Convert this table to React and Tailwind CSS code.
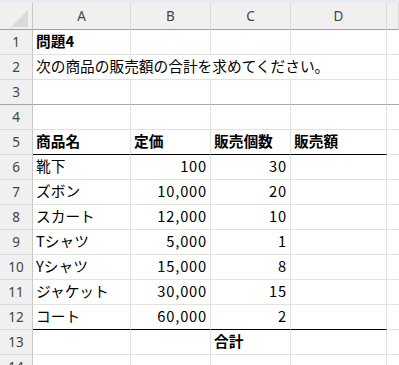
const COLS = ['A', 'B', 'C', 'D', ''];

// each row: [label, cells...]; cell = { v, bold, right, span }
const ROWS = [
  { n: 1, cells: [{ v: '問題4', bold: true }, {}, {}, {}] },
  { n: 2, cells: [{ v: '次の商品の販売額の合計を求めてください。', span: true }] },
  { n: 3, cells: [{}, {}, {}, {}], freeze: true },
  { n: 4, cells: [{}, {}, {}, {}] },
  {
    n: 5,
    cells: [
      { v: '商品名', bold: true },
      { v: '定価', bold: true },
      { v: '販売個数', bold: true },
      { v: '販売額', bold: true },
    ],
    rule: true,
  },
  { n: 6, cells: [{ v: '靴下' }, { v: '100', right: true }, { v: '30', right: true }, {}] },
  { n: 7, cells: [{ v: 'ズボン' }, { v: '10,000', right: true }, { v: '20', right: true }, {}] },
  { n: 8, cells: [{ v: 'スカート' }, { v: '12,000', right: true }, { v: '10', right: true }, {}] },
  { n: 9, cells: [{ v: 'Tシャツ' }, { v: '5,000', right: true }, { v: '1', right: true }, {}] },
  { n: 10, cells: [{ v: 'Yシャツ' }, { v: '15,000', right: true }, { v: '8', right: true }, {}] },
  { n: 11, cells: [{ v: 'ジャケット' }, { v: '30,000', right: true }, { v: '15', right: true }, {}] },
  { n: 12, cells: [{ v: 'コート' }, { v: '60,000', right: true }, { v: '2', right: true }, {}], rule: true },
  { n: 13, cells: [{}, {}, { v: '合計', bold: true }, {}] },
  { n: 14, cells: [{}, {}, {}, {}] },
];

const font = { fontFamily: '"Noto Sans CJK JP", "Noto Sans", sans-serif' };

function Cell({ cell, rule, freeze }) {
  const bottom = rule ? 'border-b-black' : freeze ? 'border-b-[#a6a6a6]' : 'border-b-[#e1e1e1]';
  return (
    <div
      className={`h-[25px] border-r border-b border-r-[#e1e1e1] ${bottom} flex items-center pb-[2px] text-[14.7px] text-black whitespace-nowrap overflow-visible ${
        cell.span ? 'col-span-4' : ''
      } ${cell.right ? 'justify-end pr-[3px] tracking-[0.8px]' : 'pl-[3px]'} ${cell.bold ? 'font-bold' : ''}`}
    >
      {cell.v}
    </div>
  );
}

export default function App() {
  return (
    <div className="w-[399px] h-[365px] overflow-hidden bg-white" style={font}>
      <div className="h-[3px] bg-[#e8ebef]" />
      <div className="grid grid-cols-[33px_98px_80px_80px_96px_1fr]">
        {/* column headers */}
        <div className="h-[27px] bg-[#f0f0f0] border-r border-b border-r-[#c8c8c8] border-b-[#a0a0a0] flex items-end justify-end pr-[4px] pb-[2px]">
          <svg width="17" height="17" viewBox="0 0 17 17">
            <polygon points="17,0 17,17 0,17" fill="#dadada" />
          </svg>
        </div>
        {COLS.map((c, i) => (
          <div
            key={i}
            className="h-[27px] bg-[#f0f0f0] border-r border-b border-r-[#dadada] border-b-[#a0a0a0] flex items-center justify-center text-[13.5px] text-[#444]"
            style={{ fontFamily: '"Noto Sans", sans-serif' }}
          >
            {c}
          </div>
        ))}

        {ROWS.map((row) => (
          <div key={row.n} className="contents">
            <div
              className={`h-[25px] bg-[#f0f0f0] border-r border-b border-r-[#c8c8c8] ${
                row.freeze ? 'border-b-[#a6a6a6]' : 'border-b-[#d9d9d9]'
              } flex items-center justify-center text-[13.5px] text-[#444]`}
              style={{ fontFamily: '"Noto Sans", sans-serif' }}
            >
              {row.n}
            </div>
            {row.cells.map((cell, i) => (
              <Cell key={i} cell={cell} rule={row.rule} freeze={row.freeze} />
            ))}
            <div
              className={`h-[25px] border-b ${row.freeze ? 'border-b-[#a6a6a6]' : 'border-b-[#e1e1e1]'}`}
            />
          </div>
        ))}
      </div>
    </div>
  );
}
